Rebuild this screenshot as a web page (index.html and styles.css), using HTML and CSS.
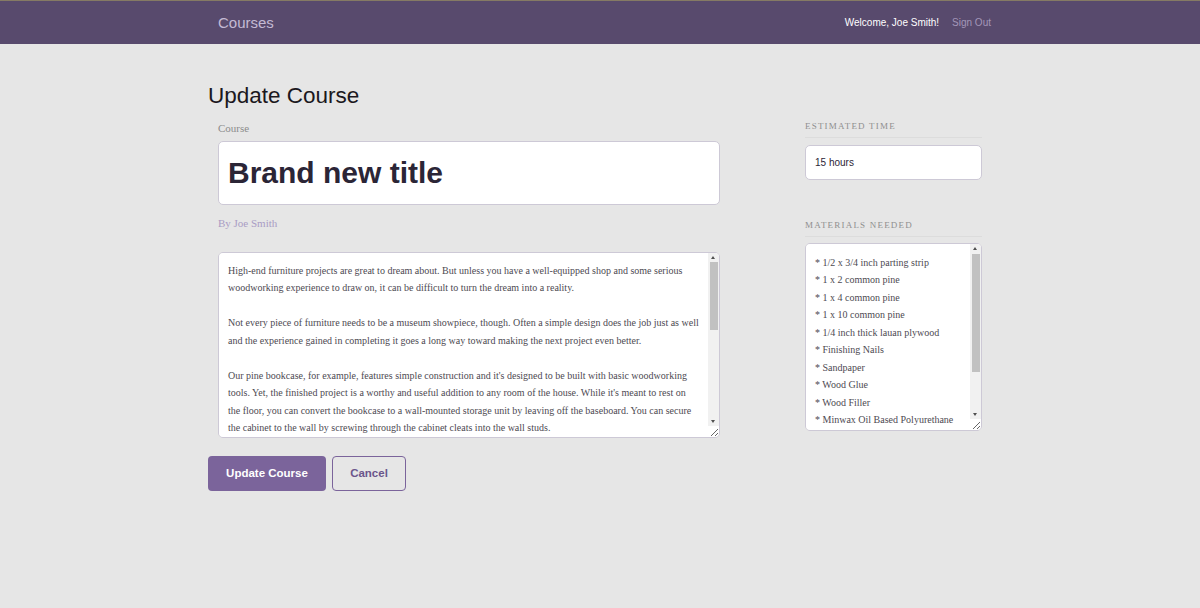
FILE: index.html
```html
<!DOCTYPE html>
<html lang="en">
<head>
<meta charset="utf-8">
<title>Courses</title>
<link rel="stylesheet" href="styles.css">
</head>
<body>
<header class="header">
  <div class="bounds header-bounds">
    <span class="logo">Courses</span>
    <nav class="nav">
      <span class="welcome">Welcome, Joe Smith!</span>
      <a class="signout" href="#">Sign Out</a>
    </nav>
  </div>
</header>
<main class="bounds main">
  <h1 class="page-title">Update Course</h1>
  <div class="grid">
    <div class="col-main">
      <label class="field-label">Course</label>
      <input class="title-input" type="text" value="Brand new title">
      <p class="byline">By Joe Smith</p>
      <div class="area-wrap desc-wrap">
        <textarea class="area desc">High-end furniture projects are great to dream about. But unless you have a well-equipped shop and some serious woodworking experience to draw on, it can be difficult to turn the dream into a reality.

Not every piece of furniture needs to be a museum showpiece, though. Often a simple design does the job just as well and the experience gained in completing it goes a long way toward making the next project even better.

Our pine bookcase, for example, features simple construction and it's designed to be built with basic woodworking tools. Yet, the finished project is a worthy and useful addition to any room of the house. While it's meant to rest on the floor, you can convert the bookcase to a wall-mounted storage unit by leaving off the baseboard. You can secure the cabinet to the wall by screwing through the cabinet cleats into the wall studs.

We made our bookcase out of inexpensive No. 2 pine, which is available at most home centers and lumberyards. Choose boards that are straight and free of large knots, cracks and other defects, and let them acclimate to the room for a few days before cutting.

The bookcase is assembled with glue and finishing nails, so no special joinery is required. Once the case is assembled, fill the nail holes with wood filler, sand all of the surfaces smooth and apply a finish of your choice.

We finished our bookcase with two coats of oil-based polyurethane, sanding lightly between coats.</textarea>
        <div class="fake-scroll desc-scroll" aria-hidden="true">
          <span class="arrow arrow-up"></span>
          <span class="thumb desc-thumb"></span>
          <span class="arrow arrow-down"></span>
        </div>
      </div>
    </div>
    <aside class="col-side">
      <h4 class="side-head">Estimated Time</h4>
      <input class="time-input" type="text" value="15 hours">
      <h4 class="side-head side-head-2">Materials Needed</h4>
      <div class="area-wrap mat-wrap">
        <textarea class="area materials">* 1/2 x 3/4 inch parting strip
* 1 x 2 common pine
* 1 x 4 common pine
* 1 x 10 common pine
* 1/4 inch thick lauan plywood
* Finishing Nails
* Sandpaper
* Wood Glue
* Wood Filler
* Minwax Oil Based Polyurethane


</textarea>
        <div class="fake-scroll mat-scroll" aria-hidden="true">
          <span class="arrow arrow-up"></span>
          <span class="thumb mat-thumb"></span>
          <span class="arrow arrow-down"></span>
        </div>
      </div>
    </aside>
  </div>
  <div class="actions">
    <button class="btn btn-primary" type="button">Update Course</button>
    <button class="btn btn-secondary" type="button">Cancel</button>
  </div>
</main>
</body>
</html>
```
FILE: styles.css
```css
* { box-sizing: border-box; }
html, body {
  margin: 0;
  padding: 0;
}
body {
  background: #e6e6e6;
  font-family: "Liberation Sans", Arial, sans-serif;
  color: #1f1b24;
}
.bounds {
  width: 784px;
  margin: 0 auto;
}
.header {
  background: #584a6d;
  border-top: 1px solid #857a64;
  height: 44px;
}
.header-bounds {
  height: 43px;
  display: flex;
  align-items: center;
  justify-content: space-between;
  padding: 0 1px 0 10px;
}
.logo {
  font-size: 15px;
  color: #c4bad4;
}
.nav {
  display: flex;
  align-items: center;
  gap: 13px;
  font-size: 10px;
}
.welcome { color: #ffffff; }
.signout {
  color: #a396b8;
  text-decoration: none;
}
.page-title {
  margin: 37.5px 0 0;
  font-size: 22.5px;
  line-height: 28px;
  font-weight: normal;
  color: #1b1820;
}
.grid {
  display: grid;
  grid-template-columns: 522px 177px;
  column-gap: 75px;
}
.col-main {
  padding: 0 10px;
  display: flex;
  flex-direction: column;
}
.field-label {
  margin-top: 11px;
  font-family: "Liberation Serif", "Times New Roman", serif;
  font-size: 11px;
  line-height: 14px;
  color: #8c8c8c;
}
.title-input {
  margin-top: 6px;
  height: 64px;
  width: 100%;
  border: 1px solid #cdc9d6;
  border-radius: 5px;
  background: #fff;
  padding: 0 9px;
  font-family: "Liberation Sans", Arial, sans-serif;
  font-size: 30px;
  font-weight: bold;
  color: #2b2536;
  outline: none;
}
.byline {
  margin: 10px 0 0;
  font-family: "Liberation Serif", "Times New Roman", serif;
  font-size: 11px;
  line-height: 16px;
  color: #a99cc4;
}
.area-wrap {
  position: relative;
}
.area {
  display: block;
  width: 100%;
  height: 100%;
  background: #fff;
  border: 1px solid #cdc9d6;
  border-radius: 5px;
  font-family: "Liberation Serif", "Times New Roman", serif;
  font-size: 10px;
  line-height: 17.5px;
  color: #4d4a52;
  outline: none;
  overflow-y: auto;
}
.desc-wrap {
  margin-top: 21px;
  height: 186px;
}
.desc {
  padding: 9px 18.7px 8px 9px;
}
.mat-wrap {
  margin-top: 6px;
  height: 188px;
}
.materials {
  padding: 10px 20px 9px 9px;
}
.fake-scroll {
  position: absolute;
  top: 1px;
  right: 1px;
  width: 11px;
  background: #f1f1f1;
  border-top-right-radius: 4px;
  pointer-events: none;
}
.desc-scroll { bottom: 12px; }
.mat-scroll { bottom: 12px; }
.arrow {
  position: absolute;
  left: 3px;
  width: 0;
  height: 0;
  border-left: 2.5px solid transparent;
  border-right: 2.5px solid transparent;
}
.arrow-up {
  top: 3px;
  border-bottom: 3px solid #505050;
}
.arrow-down {
  bottom: 3px;
  border-top: 3px solid #505050;
}
.thumb {
  position: absolute;
  left: 2px;
  right: 1px;
  background: #c1c1c1;
}
.desc-thumb {
  top: 9px;
  height: 68px;
}
.mat-thumb {
  top: 10px;
  height: 118px;
}
.col-side {
  display: flex;
  flex-direction: column;
}
.side-head {
  margin: 9px 0 0;
  padding-bottom: 4px;
  border-bottom: 1px solid #dcdcdc;
  font-family: "Liberation Serif", "Times New Roman", serif;
  font-size: 9px;
  line-height: 14px;
  font-weight: normal;
  letter-spacing: 1.2px;
  text-transform: uppercase;
  color: #8f8f8f;
}
.side-head-2 {
  margin-top: 38px;
}
.time-input {
  margin-top: 7px;
  height: 35px;
  width: 100%;
  border: 1px solid #cdc9d6;
  border-radius: 5px;
  background: #fff;
  padding: 0 9px;
  font-family: "Liberation Sans", Arial, sans-serif;
  font-size: 10px;
  color: #2b2536;
  outline: none;
}
.actions {
  margin-top: 18px;
  display: flex;
  gap: 6px;
}
.btn {
  height: 35px;
  border-radius: 4px;
  font-family: "Liberation Sans", Arial, sans-serif;
  font-size: 11.5px;
  font-weight: bold;
  cursor: pointer;
}
.btn-primary {
  width: 118px;
  background: #7b649b;
  border: none;
  color: #fff;
}
.btn-secondary {
  width: 74px;
  background: transparent;
  border: 1.5px solid #7b649b;
  color: #6b558b;
}
```
